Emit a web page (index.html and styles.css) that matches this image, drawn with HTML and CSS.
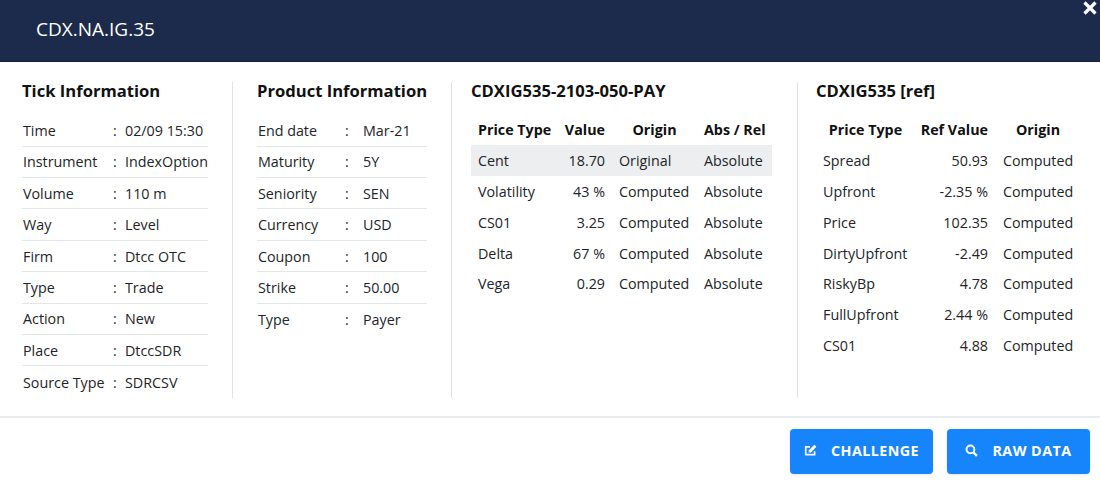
FILE: index.html
```html
<!DOCTYPE html>
<html lang="en">
<head>
<meta charset="utf-8">
<title>CDX.NA.IG.35</title>
<link rel="stylesheet" href="styles.css">
</head>
<body>
<div class="modal">
  <header class="head">
    <h1 class="title">CDX.NA.IG.35</h1>
    <svg class="close" viewBox="0 0 16 16" width="16" height="16"><path d="M2.5 2.5l11 11M13.5 2.5l-11 11" stroke="#fff" stroke-width="3.2" fill="none"/></svg>
  </header>
  <main class="panels">
    <section class="panel p1">
      <h2 class="sub">Tick Information</h2>
      <div class="info">
        <div class="row"><span class="k">Time</span><span class="c">:</span><span>02/09 15:30</span></div>
        <div class="row"><span class="k">Instrument</span><span class="c">:</span><span>IndexOption</span></div>
        <div class="row"><span class="k">Volume</span><span class="c">:</span><span>110 m</span></div>
        <div class="row"><span class="k">Way</span><span class="c">:</span><span>Level</span></div>
        <div class="row"><span class="k">Firm</span><span class="c">:</span><span>Dtcc OTC</span></div>
        <div class="row"><span class="k">Type</span><span class="c">:</span><span>Trade</span></div>
        <div class="row"><span class="k">Action</span><span class="c">:</span><span>New</span></div>
        <div class="row"><span class="k">Place</span><span class="c">:</span><span>DtccSDR</span></div>
        <div class="row"><span class="k">Source Type</span><span class="c">:</span><span>SDRCSV</span></div>
      </div>
    </section>
    <section class="panel p2">
      <h2 class="sub">Product Information</h2>
      <div class="info">
        <div class="row"><span class="k">End date</span><span class="c">:</span><span>Mar-21</span></div>
        <div class="row"><span class="k">Maturity</span><span class="c">:</span><span>5Y</span></div>
        <div class="row"><span class="k">Seniority</span><span class="c">:</span><span>SEN</span></div>
        <div class="row"><span class="k">Currency</span><span class="c">:</span><span>USD</span></div>
        <div class="row"><span class="k">Coupon</span><span class="c">:</span><span>100</span></div>
        <div class="row"><span class="k">Strike</span><span class="c">:</span><span>50.00</span></div>
        <div class="row"><span class="k">Type</span><span class="c">:</span><span>Payer</span></div>
      </div>
    </section>
    <section class="panel p3">
      <h2 class="sub">CDXIG535-2103-050-PAY</h2>
      <div class="grid">
        <div class="gr th"><span>Price Type</span><span class="r">Value</span><span class="m">Origin</span><span>Abs / Rel</span></div>
        <div class="gr hi"><span>Cent</span><span class="r">18.70</span><span>Original</span><span>Absolute</span></div>
        <div class="gr"><span>Volatility</span><span class="r">43 %</span><span>Computed</span><span>Absolute</span></div>
        <div class="gr"><span>CS01</span><span class="r">3.25</span><span>Computed</span><span>Absolute</span></div>
        <div class="gr"><span>Delta</span><span class="r">67 %</span><span>Computed</span><span>Absolute</span></div>
        <div class="gr"><span>Vega</span><span class="r">0.29</span><span>Computed</span><span>Absolute</span></div>
      </div>
    </section>
    <section class="panel p4">
      <h2 class="sub">CDXIG535 [ref]</h2>
      <div class="grid">
        <div class="gr th"><span class="m">Price Type</span><span class="r">Ref Value</span><span class="m">Origin</span></div>
        <div class="gr"><span>Spread</span><span class="r">50.93</span><span>Computed</span></div>
        <div class="gr"><span>Upfront</span><span class="r">-2.35 %</span><span>Computed</span></div>
        <div class="gr"><span>Price</span><span class="r">102.35</span><span>Computed</span></div>
        <div class="gr"><span>DirtyUpfront</span><span class="r">-2.49</span><span>Computed</span></div>
        <div class="gr"><span>RiskyBp</span><span class="r">4.78</span><span>Computed</span></div>
        <div class="gr"><span>FullUpfront</span><span class="r">2.44 %</span><span>Computed</span></div>
        <div class="gr"><span>CS01</span><span class="r">4.88</span><span>Computed</span></div>
      </div>
    </section>
  </main>
  <footer class="foot">
    <button class="btn"><svg viewBox="0 0 12 12" width="13" height="13"><path d="M9.8 6.6v3.2H1.6V2.6h4" fill="none" stroke="#fff" stroke-width="1.5"/><path d="M4.4 7.8V5.8L9.6 0.8l1.8 1.8-5 5.2z" fill="#fff"/></svg>CHALLENGE</button>
    <button class="btn"><svg viewBox="0 0 12 12" width="13" height="13"><circle cx="5" cy="5" r="3.6" fill="none" stroke="#fff" stroke-width="1.8"/><path d="M7.6 7.6l3.4 3.4" stroke="#fff" stroke-width="2.2" fill="none"/></svg>RAW DATA</button>
  </footer>
</div>
</body>
</html>
```

FILE: styles.css
```css
* { box-sizing: border-box; }
html, body { margin: 0; padding: 0; }
body { background: #fff; font-family: "Open Sans", "Noto Sans", sans-serif; color: #212529; width: 1100px; height: 481px; overflow: hidden; }
.head { height: 62px; background: #1c2b4b; border-bottom: 1px solid #14213d; display: flex; align-items: center; justify-content: space-between; padding: 0 0 4px 36px; position: relative; }
.title { margin: 0; font-size: 19px; font-weight: 400; color: #fff; }
.close { position: absolute; right: 2px; top: 0; }
.panels { display: flex; height: 356px; padding-top: 20px; border-bottom: 2px solid #e9ecef; }
.panel { height: 316px; border-right: 1px solid #dee2e6; }
.p1 { width: 233px; padding-left: 22px; padding-right: 24px; }
.p2 { width: 219px; padding-left: 24px; padding-right: 24px; }
.p3 { width: 346px; padding-left: 19px; padding-right: 25px; }
.p4 { flex: 1; padding-left: 18px; border-right: 0; }
.sub { margin: 0; font-size: 16.6px; line-height: 18px; font-weight: 700; color: #111; white-space: nowrap; }
.info { margin-top: 15.3px; font-size: 14.3px; }
.row { display: flex; height: 31.4px; align-items: center; padding-left: 1px; border-bottom: 1px solid #e3e5e8; white-space: nowrap; }
.row:last-child { border-bottom: 0; }
.p1 .k { width: 90px; }
.p1 .c { width: 12px; }
.p2 .k { width: 87px; }
.p2 .c { width: 18px; }
.grid { margin-top: 14.6px; font-size: 14.3px; }
.gr { display: grid; height: 30.8px; align-items: center; white-space: nowrap; padding-left: 7px; }
.p3 .gr { grid-template-columns: 80px 47px 99px 1fr; }
.p4 .gr { grid-template-columns: 85px 80px 85px; }
.p3 .gr > :nth-child(3) { padding: 0 14px; }
.p4 .gr > :nth-child(3) { padding-left: 15px; }
.th { font-weight: 700; color: #111; }
.hi { background: #eceef0; }
.r { text-align: right; }
.m { text-align: center; }
.foot { display: flex; justify-content: flex-end; gap: 14px; padding: 11px 10px 0 0; }
.btn { width: 143px; height: 45px; display: flex; align-items: center; justify-content: center; gap: 14px; padding-bottom: 4px; background: #1685fb; color: #fff; border: 0; border-radius: 4px; font: 700 14.3px "Open Sans", sans-serif; letter-spacing: 0.45px; box-shadow: 0 1px 3px rgba(0,0,0,.1); }
```
